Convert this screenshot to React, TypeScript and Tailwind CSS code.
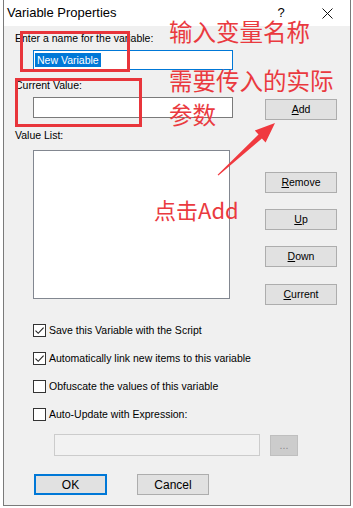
import React from "react";

type BtnProps = { label: string; mnemonic?: boolean; className?: string };

const Btn = ({ label, mnemonic = true, className = "" }: BtnProps) => (
  <div
    className={`h-[21px] w-[72px] bg-[#e1e1e1] border border-[#adadad] flex items-center justify-center text-black ${className}`}
  >
    {mnemonic ? (
      <span>
        <span className="underline underline-offset-[1px]">{label[0]}</span>
        {label.slice(1)}
      </span>
    ) : (
      label
    )}
  </div>
);

const Check = ({ checked, label }: { checked: boolean; label: string }) => (
  <div className="flex items-center h-[14px] gap-[3px]">
    <div className="w-[13px] h-[13px] border border-[#333333] bg-white flex items-center justify-center">
      {checked && (
        <svg width="11" height="11" viewBox="0 0 11 11">
          <path d="M1.5 5.6 L4.2 8.3 L9.6 2.6" fill="none" stroke="#202020" strokeWidth="1.1" />
        </svg>
      )}
    </div>
    <span className="leading-[14px]">{label}</span>
  </div>
);

const App = () => {
  return (
    <div className="relative w-[353px] h-[508px] bg-white overflow-hidden font-['Liberation_Sans',Arial,sans-serif] text-[10.5px] text-black flex pl-[3px]">
      <div className="w-[348px] h-[506px] border-l border-r border-b border-[#7a7a7a] flex flex-col">
        {/* title bar */}
        <div className="h-[26px] bg-white flex items-center pl-[3px] shrink-0">
          <span className="text-[13px] text-black">Variable Properties</span>
          <div className="ml-auto flex h-full">
            <div className="w-[46px] h-full flex items-center justify-center text-[13px]">?</div>
            <div className="w-[46px] h-full flex items-center justify-center">
              <svg width="11" height="11" viewBox="0 0 11 11">
                <path d="M0.5 0.5 L10.5 10.5 M10.5 0.5 L0.5 10.5" stroke="#111" strokeWidth="1" />
              </svg>
            </div>
          </div>
        </div>

        {/* body */}
        <div className="flex-1 bg-[#f0f0f0] pl-[11px] flex flex-col">
          <div className="flex items-start h-[273px]">
            <div className="w-[220px] flex flex-col pt-[5px]">
              <span className="h-[14px] leading-[14px]">Enter a name for the variable:</span>
              <div className="mt-[5px] ml-[18px] w-[200px] h-[20px] border border-[#0078d7] bg-white flex items-center pl-[1px]">
                <span className="bg-[#0078d7] text-white px-[2px] leading-[14px]">New Variable</span>
              </div>
              <span className="mt-[8px] h-[14px] leading-[14px]">Current Value:</span>
              <div className="mt-[5px] ml-[18px] w-[200px] h-[21px] border border-[#7a7a7a] bg-white" />
              <span className="mt-[10px] h-[14px] leading-[14px]">Value List:</span>
              <div className="mt-[8px] ml-[18px] w-[197px] h-[149px] border border-[#828790] bg-white" />
            </div>
            <div className="ml-[30px] flex flex-col pt-[73px]">
              <Btn label="Add" />
              <Btn label="Remove" className="mt-[52px]" />
              <Btn label="Up" className="mt-[16px]" />
              <Btn label="Down" className="mt-[16px]" />
              <Btn label="Current" className="mt-[17px]" />
            </div>
          </div>

          <div className="ml-[18px] mt-[24px] flex flex-col gap-[14px]">
            <Check checked label="Save this Variable with the Script" />
            <Check checked label="Automatically link new items to this variable" />
            <Check checked={false} label="Obfuscate the values of this variable" />
            <Check checked={false} label="Auto-Update with Expression:" />
          </div>

          <div className="ml-[39px] mt-[13px] flex items-center gap-[10px]">
            <div className="w-[206px] h-[22px] border border-[#cccccc] bg-[#f2f2f2]" />
            <div className="w-[28px] h-[21px] border border-[#bfbfbf] bg-[#cccccc] flex items-center justify-center text-[#8a8a8a] leading-none">
              ...
            </div>
          </div>

          <div className="ml-[19px] mt-[18px] flex gap-[30px]">
            <div className="w-[73px] h-[21px] border-2 border-[#0078d7] bg-[#e1e1e1] flex items-center justify-center text-[12px]">
              OK
            </div>
            <div className="w-[72px] h-[21px] border border-[#adadad] bg-[#e1e1e1] flex items-center justify-center text-[12px]">
              Cancel
            </div>
          </div>
        </div>
      </div>

      {/* annotations */}
      <div className="absolute left-[20px] top-[31px] w-[110px] h-[41px] border-[3px] border-[#e8353b]" />
      <div className="absolute left-[15px] top-[78px] w-[127px] h-[49px] border-[3px] border-[#e8353b]" />
      <div className="absolute left-[169px] top-[17px] text-[23.5px] leading-[28px] text-[#ea3a3f] font-['Noto_Sans_CJK_SC',sans-serif]">
        输入变量名称
      </div>
      <div className="absolute left-[169px] top-[66px] text-[23.5px] leading-[28px] text-[#ea3a3f] font-['Noto_Sans_CJK_SC',sans-serif]">
        需要传入的实际
      </div>
      <div className="absolute left-[169px] top-[100px] text-[23.5px] leading-[28px] text-[#ea3a3f] font-['Noto_Sans_CJK_SC',sans-serif]">
        参数
      </div>
      <div className="absolute left-[154px] top-[195px] text-[22px] leading-[28px] text-[#ea3a3f] font-['Noto_Sans_CJK_SC',sans-serif]">
        点击Add
      </div>
      <svg className="absolute left-0 top-0" width="353" height="508" viewBox="0 0 353 508">
        <polygon
          points="217.6,174.7 258.5,134.6 254.8,130.6 275,123 265.6,142.4 261.9,138.4 218.4,175.4"
          fill="#f0393f"
        />
      </svg>
    </div>
  );
};

export default App;
